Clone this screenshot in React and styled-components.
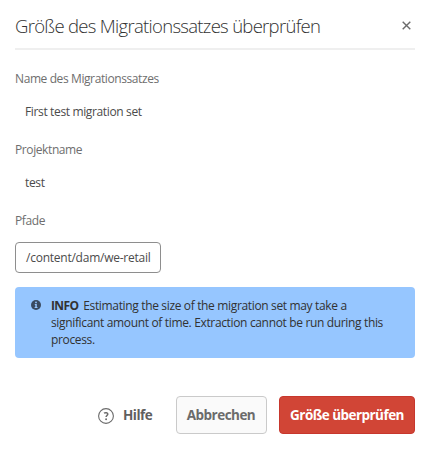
import React from "react";
import styled, { createGlobalStyle, css } from "styled-components";

const GlobalStyle = createGlobalStyle`
  *, *::before, *::after { box-sizing: border-box; }
  body {
    margin: 0;
    background: #fff;
    font-family: "Open Sans", "Noto Sans", sans-serif;
    font-size: 12px;
    line-height: 18px;
    color: #4b4b4b;
  }
`;

const Dialog = styled.section`
  display: flex;
  flex-direction: column;
  width: 427px;
  height: 450px;
  padding: 0 12px 0 15px;
  background: #fff;
`;

const Header = styled.header`
  display: flex;
  align-items: center;
  justify-content: space-between;
  height: 50px;
  padding: 3px 4px 0 0;
  border-bottom: 2px solid #efefef;
`;

const Title = styled.h1`
  margin: 0;
  font-size: 18.5px;
  font-weight: 300;
  line-height: 30px;
  letter-spacing: -0.7px;
  white-space: nowrap;
  color: #323232;
`;

const CloseButton = styled.button`
  display: flex;
  padding: 0;
  border: 0;
  background: none;
  color: #6b6b6b;
`;

const Content = styled.div`
  display: flex;
  flex-direction: column;
  padding-top: 20px;
`;

const Field = styled.div`
  display: flex;
  flex-direction: column;
  align-items: flex-start;
  gap: ${(p) => (p.$boxed ? 12 : 15)}px;
  margin-bottom: ${(p) => (p.$boxed ? 14 : 20)}px;
`;

const Label = styled.span`
  letter-spacing: -0.4px;
  color: #6e6e6e;
`;

const Value = styled.span`
  padding-left: 10px;
  letter-spacing: -0.36px;
`;

const PathBox = styled.span`
  height: 31px;
  width: 146px;
  padding: 0 10px;
  border: 1px solid #8e8e8e;
  border-radius: 4px;
  line-height: 30px;
  letter-spacing: -0.24px;
  white-space: nowrap;
`;

const Alert = styled.div`
  display: flex;
  align-items: flex-start;
  gap: 10px;
  height: 71px;
  padding: 10px 20px 10px 16px;
  border-radius: 4px;
  background: #96c6ff;
  color: #323232;
`;

const AlertIcon = styled.svg`
  flex: none;
  margin-top: 3px;
`;

const AlertText = styled.p`
  margin: 0;
  line-height: 17px;
  letter-spacing: -0.345px;
`;

const AlertTitle = styled.strong`
  margin-right: 2px;
  font-weight: 700;
  letter-spacing: -0.6px;
`;

const Footer = styled.footer`
  display: flex;
  justify-content: flex-end;
  margin-top: 38px;
`;

const variants = {
  quiet: css`
    gap: 9px;
    width: 79px;
    justify-content: flex-start;
    border-color: transparent;
    background: transparent;
    color: #5f5f5f;
    letter-spacing: -0.5px;
  `,
  secondary: css`
    width: 91px;
    padding-right: 1px;
    border-color: #cacaca;
    background: #fafafa;
    color: #6b6b6b;
  `,
  primary: css`
    width: 136px;
    margin-left: 12px;
    border-color: #c7372d;
    background: #d14536;
    color: #fff;
  `,
};

const Button = styled.button`
  display: flex;
  align-items: center;
  justify-content: center;
  height: 38px;
  padding: 0;
  border: 1px solid;
  border-radius: 4px;
  font: 700 13.5px/18px "Open Sans", "Noto Sans", sans-serif;
  letter-spacing: -0.54px;
  white-space: nowrap;
  ${(p) => variants[p.$variant]}
`;

const HelpGlyph = styled.svg`
  flex: none;
  margin-top: 2px;
`;

function CloseIcon() {
  return (
    <svg width="9" height="9" viewBox="0 0 9 9" fill="none" stroke="currentColor" strokeWidth="1.4">
      <path d="M.7.7l7.6 7.6M8.3.7L.7 8.3" />
    </svg>
  );
}

function InfoIcon() {
  return (
    <AlertIcon width="10" height="10" viewBox="0 0 10 10">
      <circle cx="5" cy="5" r="5" fill="#3a4a60" />
      <circle cx="5" cy="2.4" r=".9" fill="#96c6ff" />
      <path d="M3.8 4h2v3h.7v1H3.6V7h.7V5h-.5z" fill="#96c6ff" />
    </AlertIcon>
  );
}

function HelpIcon() {
  return (
    <HelpGlyph width="16" height="16" viewBox="0 0 16 16" fill="none" stroke="#6b6b6b">
      <circle cx="8" cy="8" r="7.4" strokeWidth="1.1" />
      <path d="M6 5.2c1.3-.9 3.8-.8 3.8.9 0 1.3-1.7 1.5-1.7 3" strokeWidth="1.5" />
      <circle cx="8.1" cy="11.2" r=".95" fill="#6b6b6b" stroke="none" />
    </HelpGlyph>
  );
}

export default function App() {
  return (
    <>
      <GlobalStyle />
      <Dialog>
        <Header>
          <Title>Größe des Migrationssatzes überprüfen</Title>
          <CloseButton>
            <CloseIcon />
          </CloseButton>
        </Header>
        <Content>
          <Field>
            <Label>Name des Migrationssatzes</Label>
            <Value>First test migration set</Value>
          </Field>
          <Field>
            <Label>Projektname</Label>
            <Value>test</Value>
          </Field>
          <Field $boxed>
            <Label>Pfade</Label>
            <PathBox>/content/dam/we-retail</PathBox>
          </Field>
          <Alert>
            <InfoIcon />
            <AlertText>
              <AlertTitle>INFO</AlertTitle> Estimating the size of the migration set may take a
              significant amount of time. Extraction cannot be run during this process.
            </AlertText>
          </Alert>
        </Content>
        <Footer>
          <Button $variant="quiet">
            <HelpIcon />
            Hilfe
          </Button>
          <Button $variant="secondary">Abbrechen</Button>
          <Button $variant="primary">Größe überprüfen</Button>
        </Footer>
      </Dialog>
    </>
  );
}
